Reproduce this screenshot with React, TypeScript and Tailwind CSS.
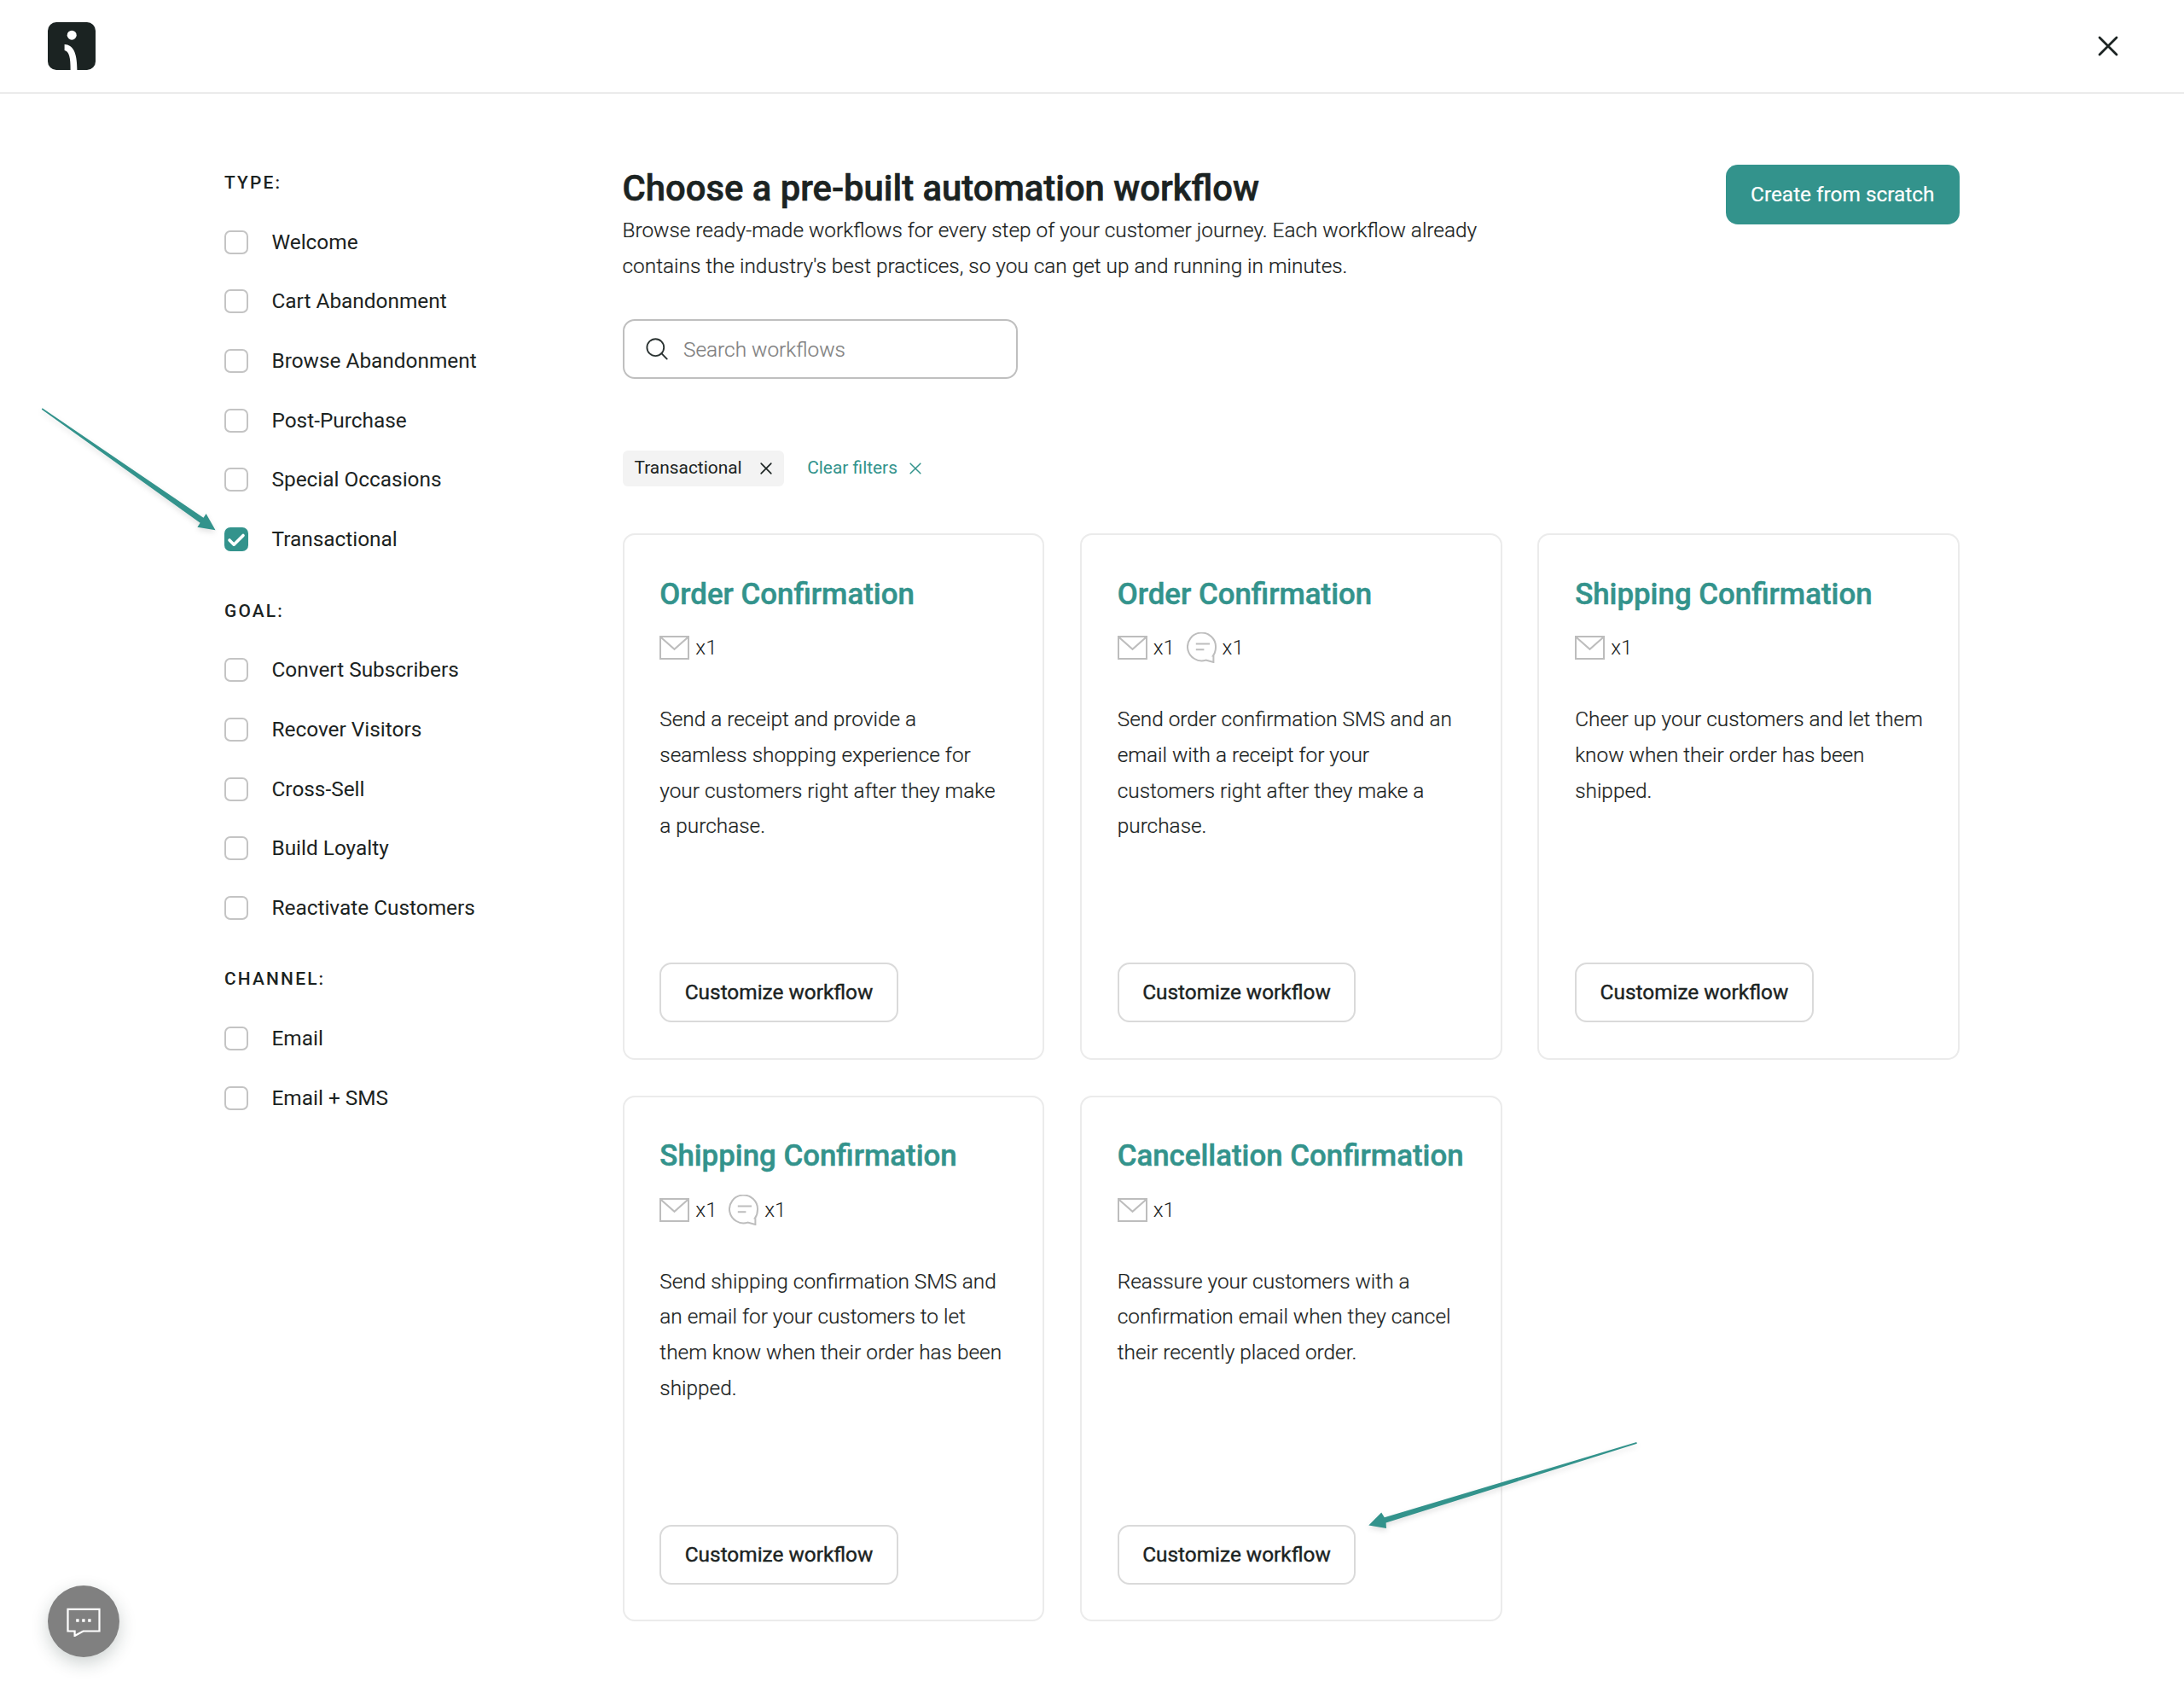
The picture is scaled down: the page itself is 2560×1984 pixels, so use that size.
import type { ReactNode } from "react";

type Workflow = {
  title: string;
  sms: boolean;
  description: string;
};

const filters = [
  {
    label: "Type:",
    options: ["Welcome", "Cart Abandonment", "Browse Abandonment", "Post-Purchase", "Special Occasions", "Transactional"],
  },
  {
    label: "Goal:",
    options: ["Convert Subscribers", "Recover Visitors", "Cross-Sell", "Build Loyalty", "Reactivate Customers"],
  },
  { label: "Channel:", options: ["Email", "Email + SMS"] },
];

const selected = ["Transactional"];

const workflows: Workflow[] = [
  {
    title: "Order Confirmation",
    sms: false,
    description: "Send a receipt and provide a\nseamless shopping experience for your customers right after they make a purchase.",
  },
  {
    title: "Order Confirmation",
    sms: true,
    description: "Send order confirmation SMS and an email with a receipt for your customers right after they make a purchase.",
  },
  {
    title: "Shipping Confirmation",
    sms: false,
    description: "Cheer up your customers and let them know when their order has been shipped.",
  },
  {
    title: "Shipping Confirmation",
    sms: true,
    description: "Send shipping confirmation SMS and an email for your customers to let them know when their order has been shipped.",
  },
  {
    title: "Cancellation Confirmation",
    sms: false,
    description: "Reassure your customers with a confirmation email when they cancel their recently placed order.",
  },
];

function Logo() {
  return (
    <svg className="size-14" viewBox="0 0 56 56" fill="none">
      <rect width="56" height="56" rx="10" fill="#1b2322" />
      <circle cx="28.2" cy="15.2" r="5.5" fill="#fff" />
      <path d="M19.6 26C29.5 26.6 34.4 35 34.4 56H26.6C26.8 41.5 25 34 19.6 32.9Z" fill="#fff" />
    </svg>
  );
}

function Cross({ className, strokeWidth }: { className: string; strokeWidth: number }) {
  return (
    <svg className={className} viewBox="0 0 24 24" fill="none" stroke="currentColor" strokeWidth={strokeWidth} strokeLinecap="round">
      <path d="M2 2L22 22M22 2L2 22" />
    </svg>
  );
}

function SearchIcon() {
  return (
    <svg className="size-[26px] text-[#2b3332]" viewBox="0 0 26 26" fill="none" stroke="currentColor" strokeWidth="1.9" strokeLinecap="round">
      <circle cx="11.3" cy="11.2" r="9.9" />
      <path d="M18.4 18.2L24.7 24.6" />
    </svg>
  );
}

function MailIcon() {
  return (
    <svg className="h-[28px] w-[35px] shrink-0" viewBox="0 0 35 28" fill="none" stroke="#bdbdbd" strokeWidth="2">
      <rect x="1" y="1" width="33" height="26" />
      <path d="M1.6 1.8L17.5 15.8L33.4 1.8" />
    </svg>
  );
}

function SmsIcon() {
  return (
    <svg className="h-[36px] w-[35px] shrink-0" viewBox="0 0 35 36" fill="none" stroke="#bdbdbd" strokeWidth="2">
      <path d="M31 27.4C33 24.6 34 20.8 34 17.4A16.5 16.4 0 1 0 22.4 32.6L31.4 35V27.4Z" />
      <path d="M11.8 13.6H26M11.8 20.2H19.4" strokeLinecap="square" />
    </svg>
  );
}

function Checkbox({ label, checked }: { label: string; checked: boolean }) {
  return (
    <label className="flex h-[69.66px] items-center gap-[27.5px] text-[24.38px] leading-[42px]">
      {checked ? (
        <span className="flex size-7 items-center justify-center rounded-[7px] bg-[#33938c]">
          <svg className="size-7" viewBox="0 0 28 28" fill="none" stroke="#fff" strokeWidth="3.6" strokeLinecap="round" strokeLinejoin="round">
            <path d="M6 15L11.2 20.2L22 9.4" />
          </svg>
        </span>
      ) : (
        <span className="size-7 rounded-[7px] border-2 border-[#c4c4c4]" />
      )}
      {label}
    </label>
  );
}

function Count({ icon }: { icon: ReactNode }) {
  return (
    <span className="flex items-center gap-[7px]">
      {icon}
      <span>x1</span>
    </span>
  );
}

function WorkflowCard({ title, sms, description }: Workflow) {
  return (
    <article className="flex flex-col items-start rounded-[14px] border-2 border-[#ebebeb] pt-[43.5px] pb-[41.5px] pl-[41.8px]">
      <h2 className="text-[34.83px] leading-[52px] font-medium whitespace-nowrap text-[#33938c] [-webkit-text-stroke:0.5px]">{title}</h2>
      <div className="mt-[15.6px] flex h-[42px] items-center gap-[13.5px] text-[24.38px] leading-[42px] font-light">
        <Count icon={<MailIcon />} />
        {sms && <Count icon={<SmsIcon />} />}
      </div>
      <p className="mt-[41.8px] w-[409px] text-[24.38px] leading-[41.8px] font-light whitespace-pre-line [-webkit-text-stroke:0.2px]">
        {description}
      </p>
      <button className="mt-auto h-[70px] w-[279.5px] rounded-[14px] border-2 border-[#dadada] text-[24.38px] [-webkit-text-stroke:0.4px]">
        Customize workflow
      </button>
    </article>
  );
}

export default function App() {
  return (
    <div className="relative h-[1984px] w-[2560px] overflow-hidden bg-white font-[Roboto,sans-serif] text-[#1b2322]">
      <header className="flex h-[110px] items-center justify-between border-b-2 border-[#ebebeb] pr-[77px] pl-[55.5px]">
        <Logo />
        <Cross className="size-[24px]" strokeWidth={2.8} />
      </header>

      <div className="flex pt-[69.2px] pl-[263px]">
        <aside className="w-[466.5px] shrink-0">
          {filters.map((group) => (
            <section key={group.label} className="mb-[13.93px]">
              <h3 className="flex h-[69.66px] items-center pt-[1.4px] text-[20.9px] font-medium tracking-[2.2px] uppercase">{group.label}</h3>
              {group.options.map((option) => (
                <Checkbox key={option} label={option} checked={selected.includes(option)} />
              ))}
            </section>
          ))}
        </aside>

        <main className="w-[1567.5px] pt-[13.8px]">
          <div className="flex items-start justify-between">
            <div className="w-[1045px]">
              <h1 className="text-[41.8px] leading-[56px] font-medium [-webkit-text-stroke:0.6px]">Choose a pre-built automation workflow</h1>
              <p className="text-[24.38px] leading-[41.8px] font-light [-webkit-text-stroke:0.2px]">
                Browse ready-made workflows for every step of your customer journey. Each workflow already contains the
                industry's best practices, so you can get up and running in minutes.
              </p>
            </div>
            <button className="h-[70px] w-[274.5px] rounded-[14px] bg-[#33938c] text-[24.38px] text-white [-webkit-text-stroke:0.2px]">
              Create from scratch
            </button>
          </div>

          <div className="mt-[41.6px] flex h-[70px] w-[463px] items-center gap-[18.5px] rounded-[14px] border-2 border-[#bfbfbf] pl-[25px]">
            <SearchIcon />
            <span className="pt-[2px] text-[24.38px] font-light text-[#808080] [-webkit-text-stroke:0.2px]">Search workflows</span>
          </div>

          <div className="mt-[83.8px] flex h-[41.8px] items-center text-[20.9px]">
            <span className="flex h-full items-center gap-[21px] rounded-[6px] bg-[#f3f3f3] px-[14px]">
              Transactional
              <Cross className="size-[14px]" strokeWidth={2.8} />
            </span>
            <button className="ml-[27.5px] flex items-center gap-[14px] text-[#33938c]">
              Clear filters
              <Cross className="size-[14px]" strokeWidth={2.6} />
            </button>
          </div>

          <div className="mt-[55.4px] grid auto-rows-[616.7px] grid-cols-3 gap-[41.8px]">
            {workflows.map((workflow, index) => (
              <WorkflowCard key={index} {...workflow} />
            ))}
          </div>
        </main>
      </div>

      {/* callout arrows */}
      <svg className="absolute top-0 left-0 h-[1984px] w-[2560px] drop-shadow-[0_3px_3px_rgba(0,0,0,0.12)]" viewBox="0 0 2560 1984" fill="#33938c">
        <path d="M49.6 478.3L238.5 606.8L241.6 602L252.5 621.2L231.4 617.8L234.6 612.8L48.8 479.7Z" />
        <path d="M1918.3 1690L1622.8 1778.3L1619.2 1772.6L1604.3 1787.6L1625 1791L1624.6 1784.6L1918.8 1691.8Z" />
      </svg>

      <button className="absolute top-[1858px] left-[55.5px] flex size-[84px] items-center justify-center rounded-full bg-[#808080] shadow-[0_7px_20px_rgba(27,50,45,0.22)]">
        <svg className="h-[36px] w-[40px]" viewBox="0 0 40 36" fill="none" stroke="#fff" strokeWidth="2.2">
          <path d="M1.5 3.8H38.5V29.5H19.5L9.6 35V29.5H1.5Z" />
          <path d="M11.2 17H14.6M18.2 17H21.6M25.2 17H28.6" strokeWidth="3.4" />
        </svg>
      </button>
    </div>
  );
}
